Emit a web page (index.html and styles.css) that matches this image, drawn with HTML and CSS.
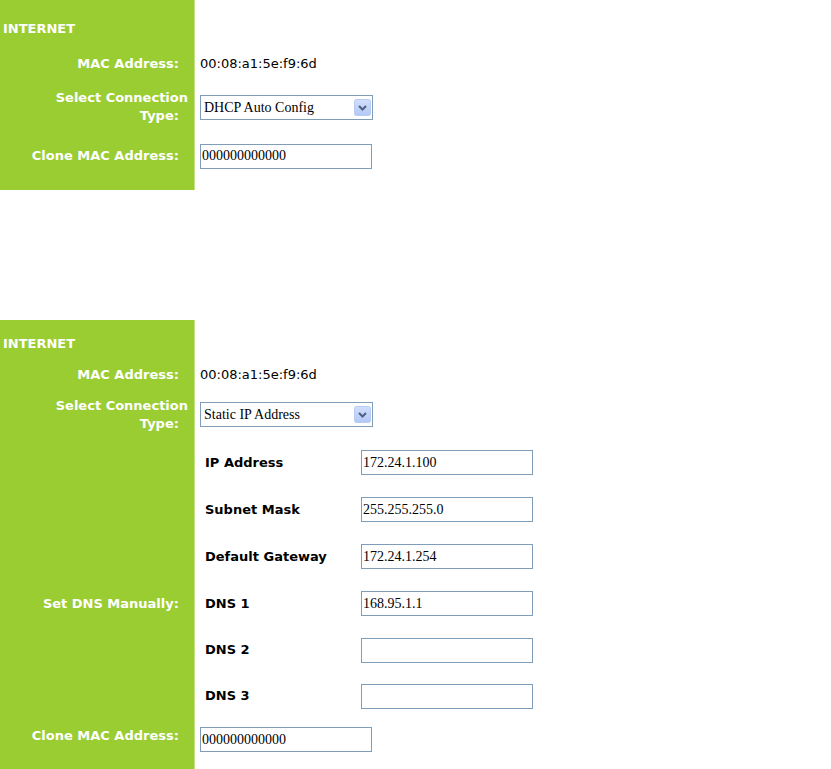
FILE: index.html
```html
<!DOCTYPE html>
<html lang="en">
<head>
  <meta charset="utf-8">
  <title>Internet Setup</title>
  <link rel="stylesheet" href="styles.css">
</head>
<body>
  <!-- DHCP mode -->
  <div class="wan wan--dhcp">
    <div class="wan__label wan__title">INTERNET</div>
    <div class="wan__value"></div>

    <div class="wan__label">MAC Address:&nbsp;&nbsp;</div>
    <div class="wan__value">00:08:a1:5e:f9:6d</div>

    <div class="wan__label">Select Connection<br>Type:&nbsp;&nbsp;</div>
    <div class="wan__value">
      <span class="select">
        <select class="select__field">
          <option selected>DHCP Auto Config</option>
          <option>Static IP Address</option>
          <option>PPPoE</option>
        </select>
        <svg class="select__arrow" width="17" height="17" viewBox="0 0 17 17" aria-hidden="true">
          <defs>
            <linearGradient id="arrow-bg-1" x1="0" y1="0" x2="0" y2="1">
              <stop offset="0" stop-color="#d2defc"/>
              <stop offset="1" stop-color="#b2c8f6"/>
            </linearGradient>
          </defs>
          <rect x="0.5" y="0.5" width="16" height="16" rx="2" fill="url(#arrow-bg-1)" stroke="#b7cbf5"/>
          <path d="M5 7l3.5 3.5L12 7" fill="none" stroke="#4d6185" stroke-width="2"/>
        </svg>
      </span>
    </div>

    <div class="wan__label wan__last">Clone MAC Address:&nbsp;&nbsp;</div>
    <div class="wan__value wan__last">
      <input class="field" type="text" value="000000000000">
    </div>
  </div>

  <!-- Static IP mode -->
  <div class="wan wan--static">
    <div class="wan__label wan__title">INTERNET</div>
    <div class="wan__value"></div>

    <div class="wan__label">MAC Address:&nbsp;&nbsp;</div>
    <div class="wan__value">00:08:a1:5e:f9:6d</div>

    <div class="wan__label">Select Connection<br>Type:&nbsp;&nbsp;</div>
    <div class="wan__value">
      <span class="select">
        <select class="select__field">
          <option>DHCP Auto Config</option>
          <option selected>Static IP Address</option>
          <option>PPPoE</option>
        </select>
        <svg class="select__arrow" width="17" height="17" viewBox="0 0 17 17" aria-hidden="true">
          <defs>
            <linearGradient id="arrow-bg-2" x1="0" y1="0" x2="0" y2="1">
              <stop offset="0" stop-color="#d2defc"/>
              <stop offset="1" stop-color="#b2c8f6"/>
            </linearGradient>
          </defs>
          <rect x="0.5" y="0.5" width="16" height="16" rx="2" fill="url(#arrow-bg-2)" stroke="#b7cbf5"/>
          <path d="M5 7l3.5 3.5L12 7" fill="none" stroke="#4d6185" stroke-width="2"/>
        </svg>
      </span>
    </div>

    <div class="wan__label"></div>
    <div class="wan__value">
      <span class="sub-label">IP Address</span>
      <input class="field" type="text" value="172.24.1.100">
    </div>

    <div class="wan__label"></div>
    <div class="wan__value">
      <span class="sub-label">Subnet Mask</span>
      <input class="field" type="text" value="255.255.255.0">
    </div>

    <div class="wan__label"></div>
    <div class="wan__value">
      <span class="sub-label">Default Gateway</span>
      <input class="field" type="text" value="172.24.1.254">
    </div>

    <div class="wan__label">Set DNS Manually:&nbsp;&nbsp;</div>
    <div class="wan__value">
      <span class="sub-label">DNS 1</span>
      <input class="field" type="text" value="168.95.1.1">
    </div>

    <div class="wan__label"></div>
    <div class="wan__value">
      <span class="sub-label">DNS 2</span>
      <input class="field" type="text" value="">
    </div>

    <div class="wan__label"></div>
    <div class="wan__value">
      <span class="sub-label">DNS 3</span>
      <input class="field" type="text" value="">
    </div>

    <div class="wan__label wan__last">Clone MAC Address:&nbsp;&nbsp;</div>
    <div class="wan__value wan__last">
      <input class="field" type="text" value="000000000000">
    </div>
  </div>
</body>
</html>
```

FILE: styles.css
```css
*, *::before, *::after {
  box-sizing: border-box;
}

body {
  margin: 0;
  background: #ffffff;
  font-family: "DejaVu Sans", Verdana, sans-serif;
  font-size: 13px;
  line-height: 16px;
  color: #000000;
}

.wan {
  display: grid;
  grid-template-columns: 195px 1fr;
}

.wan--dhcp {
  grid-template-rows: 46px 36px 50px 58px;
}

.wan--static {
  margin-top: 130px;
  grid-template-rows: 40px 30px 49px 47px 47px 47px 47px 46px 46px 71px;
}

.wan__label {
  display: flex;
  align-items: center;
  justify-content: flex-end;
  padding-right: 6px;
  background: #9acd32;
  border-right: 1px solid #c4e285;
  color: #ffffff;
  font-weight: bold;
  text-align: right;
  line-height: 18px;
}

.wan__title {
  justify-content: flex-start;
  padding-left: 3px;
  padding-top: 12px;
  text-align: left;
}

.wan--static .wan__title {
  padding-top: 8px;
}

.wan__value {
  display: flex;
  align-items: center;
  padding-left: 5px;
}

.wan--dhcp .wan__last {
  padding-bottom: 10px;
}

.wan--static .wan__last {
  align-items: flex-start;
  padding-top: 8px;
}

.sub-label {
  width: 161px;
  padding-left: 5px;
  font-weight: bold;
}

.field,
.select__field {
  width: 172px;
  height: 25px;
  margin: 0;
  border: 1px solid #7f9db9;
  border-radius: 0;
  background: #ffffff;
  font-family: "Liberation Serif", "Times New Roman", serif;
  font-size: 14px;
  color: #000000;
}

.field {
  padding: 0 1px;
}

.select {
  position: relative;
  display: inline-block;
}

.select__field {
  display: block;
  width: 173px;
  padding: 0 22px 0 3px;
  appearance: none;
  -webkit-appearance: none;
  outline: none;
}

.select__arrow {
  position: absolute;
  top: 4px;
  right: 2px;
  pointer-events: none;
}
```
